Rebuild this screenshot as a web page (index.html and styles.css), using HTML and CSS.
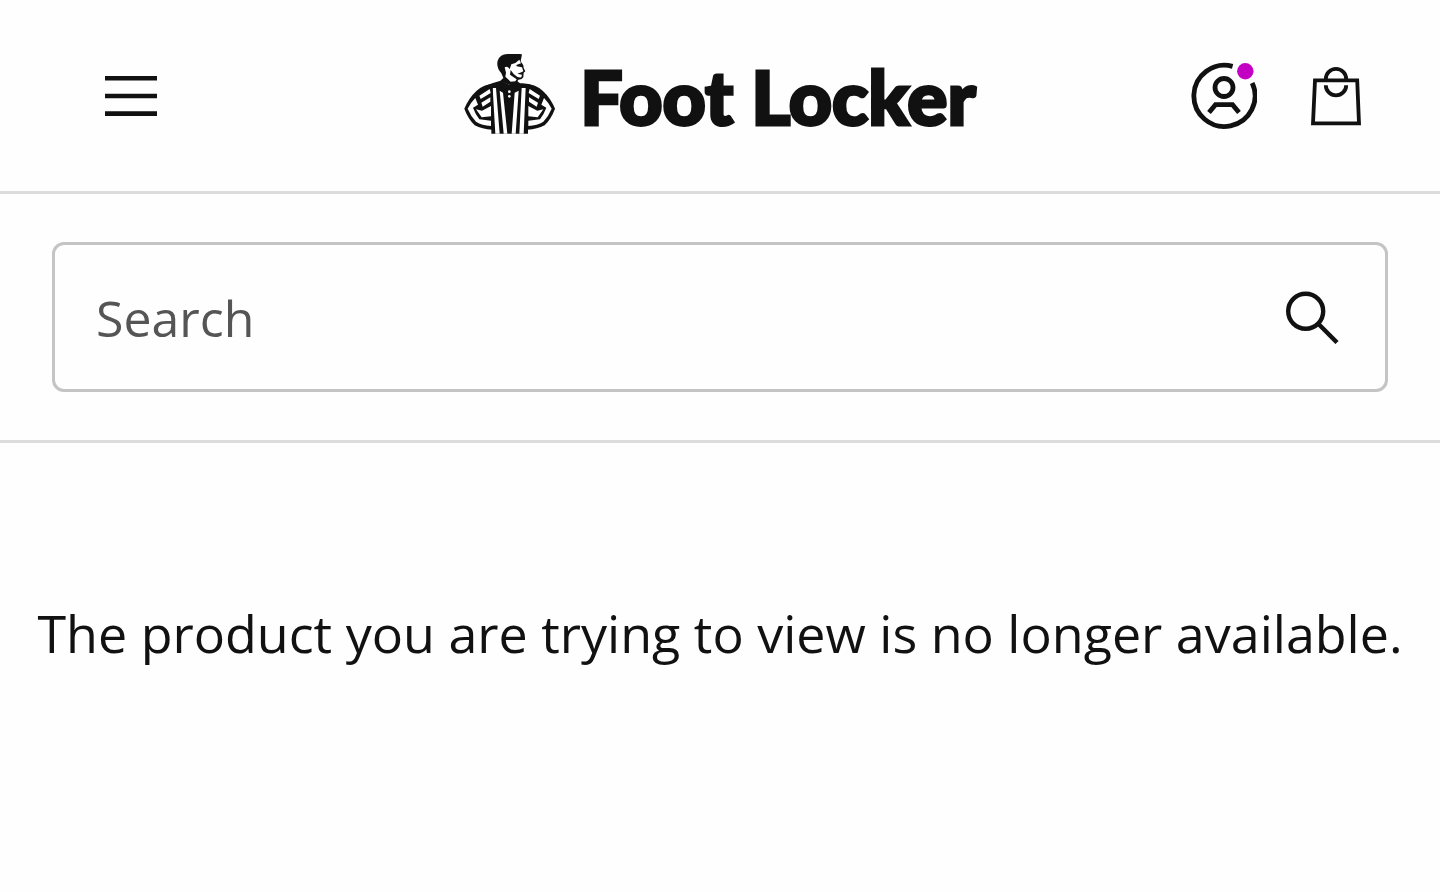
FILE: index.html
```html
<!DOCTYPE html>
<html lang="en">
<head>
  <meta charset="UTF-8">
  <meta name="viewport" content="width=device-width, initial-scale=1">
  <title>Foot Locker</title>
  <link rel="stylesheet" href="styles.css">
</head>
<body>
  <header class="header">
    <button class="icon-button menu" type="button" aria-label="Menu">
      <svg width="52" height="40" viewBox="0 0 52 40" fill="none" stroke="#111" stroke-width="4.6">
        <path d="M0 2.3H52M0 20H52M0 37.6H52"/>
      </svg>
    </button>

    <a class="logo" href="#">
      <svg width="92" height="84" viewBox="24 26 276 252" aria-hidden="true">
        <!-- shirt -->
        <path fill="#111" d="M134 106L160 118L184 108L192 114Q214 112 236 122V150L216 170V265H106V170L86 150V122Q110 112 134 106Z"/>
        <path fill="#fff" d="M110 128H120L131 265H118ZM131 136L141 142L154 265H143ZM176 142L188 136L179 265H167ZM197 128H209L203 265H190Z"/>
        <circle cx="160" cy="139" r="4" fill="#fff"/>
        <circle cx="160" cy="153" r="4" fill="#fff"/>
        <!-- arm, mirrored for the other side -->
        <g id="arm">
          <path fill="#111" d="M110 116Q82 118 62 136Q38 158 25 190Q36 220 56 240Q78 252 108 253Z"/>
          <path fill="#fff" d="M58 158Q44 172 35 190Q44 212 60 229Q78 240 105 242V226L70 222Q58 206 51 187L66 178Z"/>
          <path fill="#fff" d="M60 192L78 196L105 182V213L77 216Z"/>
          <path fill="#fff" d="M70 151L101 131L104 143L74 161ZM76 172L103 156V169L80 184Z"/>
        </g>
        <use href="#arm" transform="translate(322 0) scale(-1 1)"/>
        <!-- head -->
        <path fill="#111" d="M132 108L142 98L136 84Q120 66 125 46Q132 27 154 26Q178 23 198 27L194 48L202 60L203 68L208 78L203 82L202 96Q198 104 186 103L184 112L176 122L160 118Z"/>
        <path fill="#fff" d="M146 66Q156 60 161 72L166 57Q180 54 190 43L195 54L181 59L182 63L198 66L202 78L196 81L184 85L198 88L196 96Q184 98 173 86L164 74L162 88L182 102L178 108L164 109L148 94L150 82Z"/>
      </svg>
      <span class="wordmark">Foot Locker</span>
    </a>

    <div class="actions">
      <button class="icon-button" type="button" aria-label="My account">
        <svg width="68" height="68" viewBox="0 0 68 68" fill="none" stroke="#111" stroke-width="4.8">
          <path d="M43.6 4.4A30.6 30.6 0 1 0 63.2 21"/>
          <circle cx="35" cy="25.5" r="9"/>
          <path d="M20 50.5L26.5 42.7H43.5L50 50.5"/>
          <circle cx="56.3" cy="9.2" r="8.2" fill="#c400c4" stroke="none"/>
        </svg>
      </button>
      <button class="icon-button" type="button" aria-label="Cart">
        <svg width="52" height="60" viewBox="0 0 52 60" fill="none" stroke="#111" stroke-width="3.8">
          <path d="M5 14.3H47.2L49 57.3H3ZM15.8 14V13A10 10 0 0 1 36.2 13V14M15.8 19.2A10.2 10.2 0 0 0 36.2 19.2"/>
        </svg>
      </button>
    </div>
  </header>

  <form class="search">
    <div class="search-box">
      <input type="search" aria-label="Search" placeholder="Search">
      <button class="icon-button" type="submit" aria-label="Submit search">
        <svg width="54" height="54" viewBox="0 0 54 54" fill="none" stroke="#111" stroke-width="4.4">
          <circle cx="20.7" cy="21.2" r="17.5"/>
          <path d="M33 33.5L52 52.5"/>
        </svg>
      </button>
    </div>
  </form>

  <main class="content">
    <p>The product you are trying to view is no longer available.</p>
  </main>
</body>
</html>
```
FILE: styles.css
```css
* {
  box-sizing: border-box;
}
body {
  margin: 0;
  background: #fefefe;
  color: #111;
  font-family: "Open Sans", sans-serif;
}
.header {
  display: grid;
  grid-template-columns: 1fr auto 1fr;
  align-items: center;
  min-height: 194px;
  padding: 0 78px;
  border-bottom: 3px solid #dcdcdc;
}
.icon-button {
  padding: 0;
  border: none;
  background: none;
  cursor: pointer;
}
.icon-button svg, .logo svg {
  display: block;
}
.menu {
  justify-self: start;
  padding: 0 27px;
}
.logo {
  display: flex;
  align-items: center;
  gap: 24px;
  color: #111;
  text-decoration: none;
}
.wordmark {
  font-family: Lato, sans-serif;
  font-size: 75px;
  font-weight: 900;
  line-height: 84px;
  white-space: nowrap;
  -webkit-text-stroke: 3px #111;
}
.actions {
  display: flex;
  align-items: center;
  justify-content: flex-end;
  gap: 53px;
}
.search {
  padding: 48px 52px;
  border-bottom: 3px solid #dcdcdc;
}
.search-box {
  display: flex;
  align-items: center;
  height: 150px;
  padding: 0 46px 0 41px;
  border: 3px solid #c4c4c4;
  border-radius: 12px;
}
.search-box input {
  flex: 1;
  min-width: 0;
  padding: 2px 0 0;
  border: none;
  outline: none;
  background: none;
  color: #111;
  font-family: inherit;
  font-size: 50px;
}
.search-box input::placeholder {
  color: #555;
}
.content {
  padding: 154px 24px;
  text-align: center;
}
.content p {
  margin: 0;
  font-size: 52px;
  line-height: 72px;
}
```
